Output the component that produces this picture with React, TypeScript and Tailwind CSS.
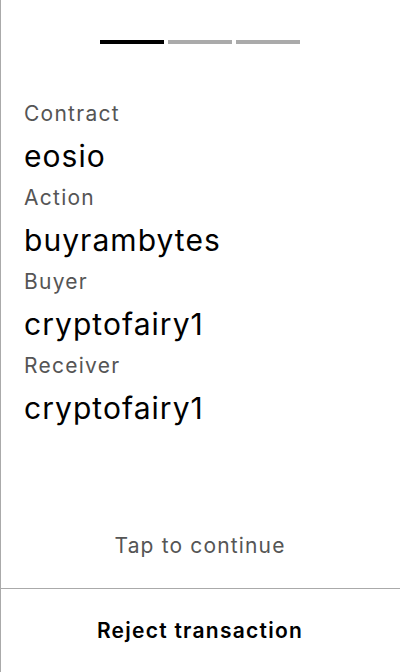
export default function App() {
  const fields = [
    { label: "Contract", value: "eosio" },
    { label: "Action", value: "buyrambytes" },
    { label: "Buyer", value: "cryptofairy1" },
    { label: "Receiver", value: "cryptofairy1" },
  ];

  return (
    <div
      className="flex h-[672px] w-[400px] flex-col bg-white shadow-[inset_1px_0_0_#aaaaaa]"
      style={{ fontFamily: "Inter, 'Noto Sans', sans-serif" }}
    >
      <div className="flex justify-center gap-1 pt-10">
        <div className="h-1 w-16 bg-black" />
        <div className="h-1 w-16 bg-[#aaaaaa]" />
        <div className="h-1 w-16 bg-[#aaaaaa]" />
      </div>

      <div className="flex flex-col px-6 pt-[56px]">
        {fields.map((f) => (
          <div key={f.label} className="flex flex-col">
            <div className="text-[21px] leading-[28px] tracking-[0.06em] text-[#555555]">{f.label}</div>
            <div className="text-[30px] leading-[56px] tracking-[0.035em] text-black">{f.value}</div>
          </div>
        ))}
      </div>

      <div className="flex-1" />

      <div className="pb-[28px] text-center text-[21px] leading-[28px] tracking-[0.055em] text-[#555555]">
        Tap to continue
      </div>

      <button className="h-[84px] w-full border-t border-[#aaaaaa] text-center text-[21px] font-semibold tracking-[0.06em] text-black">
        Reject transaction
      </button>
    </div>
  );
}
